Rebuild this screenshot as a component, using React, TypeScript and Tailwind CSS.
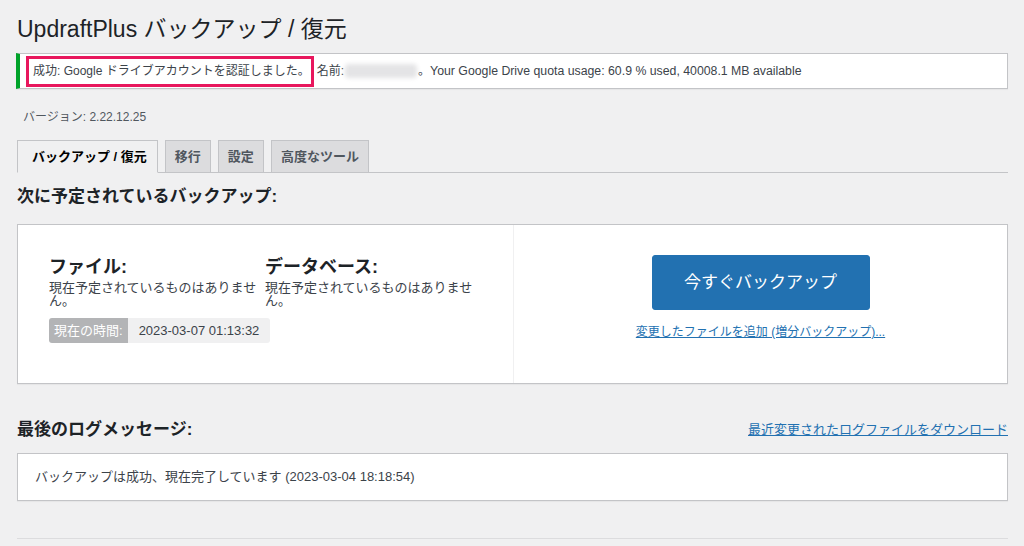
export default function App() {
    const tabs = [
        { name: 'バックアップ / 復元', active: true },
        { name: '移行', active: false },
        { name: '設定', active: false },
        { name: '高度なツール', active: false },
    ];

    return (
        <div
            className="w-[1024px] h-[546px] overflow-hidden bg-[#f0f0f1] text-[#1d2327] pl-[17px] pr-[16px]"
            style={{ fontFamily: '"Liberation Sans", "Noto Sans CJK JP", sans-serif' }}
        >
            {/* title */}
            <h1 className="pt-[15px] h-[53px] text-[23px] leading-[29px] font-normal text-[#1d2327]">
                UpdraftPlus バックアップ / 復元
            </h1>

            {/* notice */}
            <div className="-ml-[1px] h-[36px] flex items-center bg-white border border-[#c3c4c7] border-l-4 border-l-[#00a32a] pl-[6px] text-[12px] text-[#3c434a] shadow-[0_1px_1px_rgba(0,0,0,0.04)]">
                <span className="h-[31px] flex items-center border-[3px] border-[#e8175d] pl-[4px] pr-[1px]">
                    成功: Google ドライブアカウントを認証しました。
                </span>
                <span className="ml-[3px]">名前:</span>
                <span className="ml-[1px] w-[72px] h-[14px] rounded-sm bg-[#e4e4e6] blur-[2px]" />
                <span className="ml-[1px]">。</span>
                <span className="text-[12.3px]">Your Google Drive quota usage: 60.9 % used, 40008.1 MB available</span>
            </div>

            {/* version */}
            <div className="pt-[20px] pl-[6px] h-[51px] text-[12px] leading-[16px] text-[#50575e]">
                バージョン: 2.22.12.25
            </div>

            {/* tabs */}
            <div className="flex items-end gap-[7px] border-b border-[#c3c4c7] h-[33px]">
                {tabs.map((tab) => (
                    <div
                        key={tab.name}
                        className={`h-[33px] flex items-center text-[13px] font-bold border border-[#c3c4c7] -mb-[1px] ${
                            tab.active
                                ? 'pl-[14px] pr-[10px] bg-[#f0f0f1] border-b-[#f0f0f1] text-[#000]'
                                : 'px-[9px] bg-[#dcdcde] text-[#50575e]'
                        }`}
                    >
                        {tab.name}
                    </div>
                ))}
            </div>

            {/* next scheduled */}
            <h2 className="pt-[13px] h-[51px] text-[17px] leading-[22px] font-bold text-[#1d2327]">
                次に予定されているバックアップ:
            </h2>

            <div className="flex h-[160px] bg-white border border-[#c3c4c7] shadow-[0_1px_1px_rgba(0,0,0,0.04)]">
                <div className="w-[496px] border-r border-[#f0f0f1] pl-[31px] pt-[30px]">
                    <div className="flex gap-[6px]">
                        <div className="w-[210px]">
                            <div className="text-[18px] leading-[24px] font-bold text-[#1d2327]">ファイル:</div>
                            <div className="mt-[2px] text-[13px] leading-[13px] text-[#3c434a]">
                                現在予定されているものはありませ
                                <br />
                                ん。
                            </div>
                        </div>
                        <div className="w-[216px]">
                            <div className="text-[18px] leading-[24px] font-bold text-[#1d2327]">データベース:</div>
                            <div className="mt-[2px] text-[13px] leading-[13px] text-[#3c434a]">
                                現在予定されているものはありませ
                                <br />
                                ん。
                            </div>
                        </div>
                    </div>
                    <div className="mt-[11px] inline-flex h-[25px] rounded-[3px] overflow-hidden text-[13px]">
                        <span className="flex items-center px-[5px] bg-[#b3b4b6] text-white">現在の時間:</span>
                        <span className="flex items-center px-[11px] bg-[#f0f0f1] text-[#3c434a]">2023-03-07 01:13:32</span>
                    </div>
                </div>
                <div className="flex-1 flex flex-col items-center pt-[30px]">
                    <button className="w-[218px] h-[55px] rounded-[3px] bg-[#2271b1] text-white text-[17px] border border-[#2271b1]">
                        今すぐバックアップ
                    </button>
                    <a href="#" className="mt-[14px] text-[12px] leading-[16px] text-[#2271b1] underline">
                        変更したファイルを追加 (増分バックアップ)...
                    </a>
                </div>
            </div>

            {/* last log */}
            <div className="flex items-end justify-between pt-[21px] h-[57px]">
                <h2 className="text-[17px] leading-[22px] font-bold text-[#1d2327]">最後のログメッセージ:</h2>
                <a href="#" className="text-[13px] leading-[22px] text-[#2271b1] underline">
                    最近変更されたログファイルをダウンロード
                </a>
            </div>

            <div className="mt-[12px] h-[48px] flex items-center bg-white border border-[#c3c4c7] pl-[17px] text-[13px] text-[#3c434a] shadow-[0_1px_1px_rgba(0,0,0,0.04)]">
                バックアップは成功、現在完了しています (2023-03-04 18:18:54)
            </div>

            <div className="mt-[37px] border-t border-[#dcdcde]" />
        </div>
    );
}
